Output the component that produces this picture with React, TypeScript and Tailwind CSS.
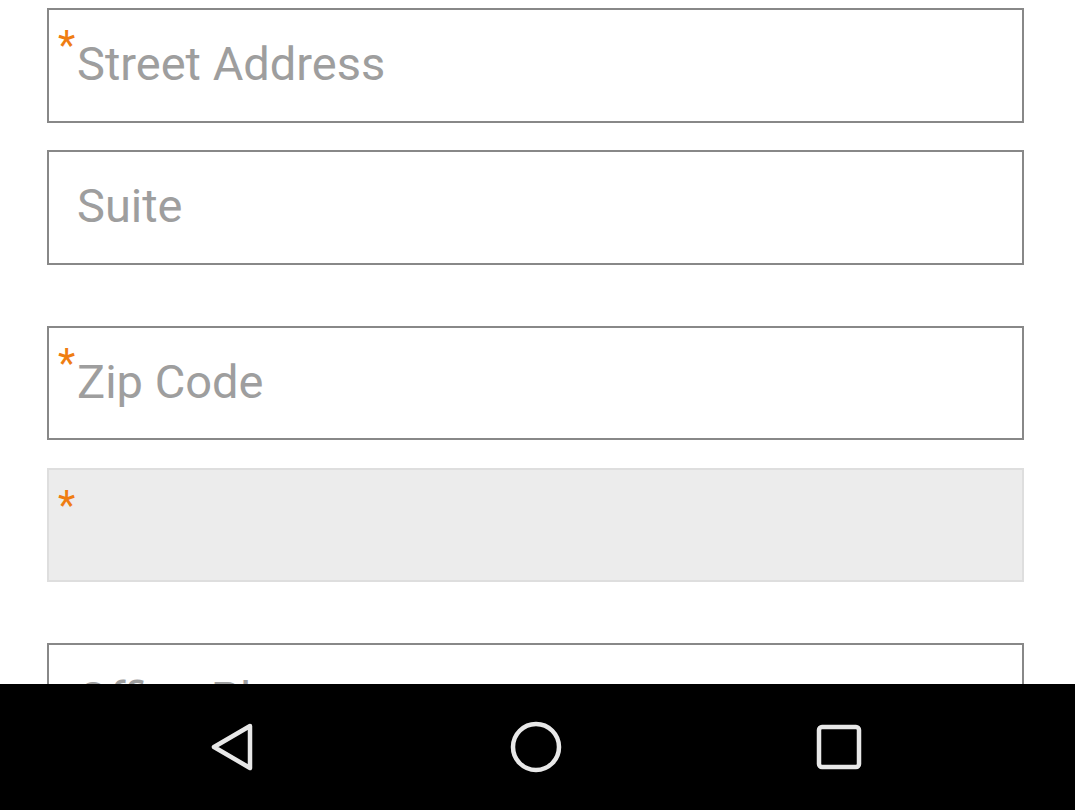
import React from 'react';

interface FieldProps {
  label?: string;
  required?: boolean;
  disabled?: boolean;
  className?: string;
}

const Field: React.FC<FieldProps> = ({ label, required, disabled, className = '' }) => {
  return (
    <div
      className={`w-[977px] flex items-start pl-[9px] ${
        disabled ? 'bg-[#ececec] border-2 border-[#dedede]' : 'bg-white border-2 border-[#888888]'
      } ${className}`}
    >
      <span className="w-[19px] shrink-0 text-[40px] leading-none text-[#ef7d12] mt-[16px]">
        {required ? '*' : ''}
      </span>
      {label && <span className="text-[47px] leading-none text-[#9e9e9e] mt-[30px]">{label}</span>}
    </div>
  );
};

export default function App() {
  return (
    <div
      className="w-[1075px] h-[810px] flex flex-col bg-white overflow-hidden"
      style={{ fontFamily: 'Roboto, "Noto Sans", sans-serif' }}
    >
      {/* Form (scrolled) */}
      <div className="flex-1 overflow-hidden pt-[8px] pl-[47px]">
        <Field label="Street Address" required className="h-[115px]" />
        <Field label="Suite" className="h-[115px] mt-[27px]" />
        <Field label="Zip Code" required className="h-[114px] mt-[61px]" />
        <Field required disabled className="h-[114px] mt-[28px]" />
        <Field label="Office Phone" className="h-[115px] mt-[61px]" />
      </div>

      {/* Android nav bar */}
      <div className="h-[126px] shrink-0 bg-black flex items-center justify-center gap-[254px] pr-[5px]">
        <svg width="48" height="48" viewBox="0 0 48 48" fill="none">
          <polygon points="42,3 6,24 42,45" stroke="#e8e8e8" strokeWidth="4.5" strokeLinejoin="round" />
        </svg>
        <svg width="52" height="52" viewBox="0 0 52 52" fill="none">
          <circle cx="26" cy="26" r="23" stroke="#e8e8e8" strokeWidth="4.5" />
        </svg>
        <svg width="46" height="46" viewBox="0 0 46 46" fill="none">
          <rect x="3" y="3" width="40" height="40" rx="3" stroke="#e8e8e8" strokeWidth="4.5" />
        </svg>
      </div>
    </div>
  );
}
